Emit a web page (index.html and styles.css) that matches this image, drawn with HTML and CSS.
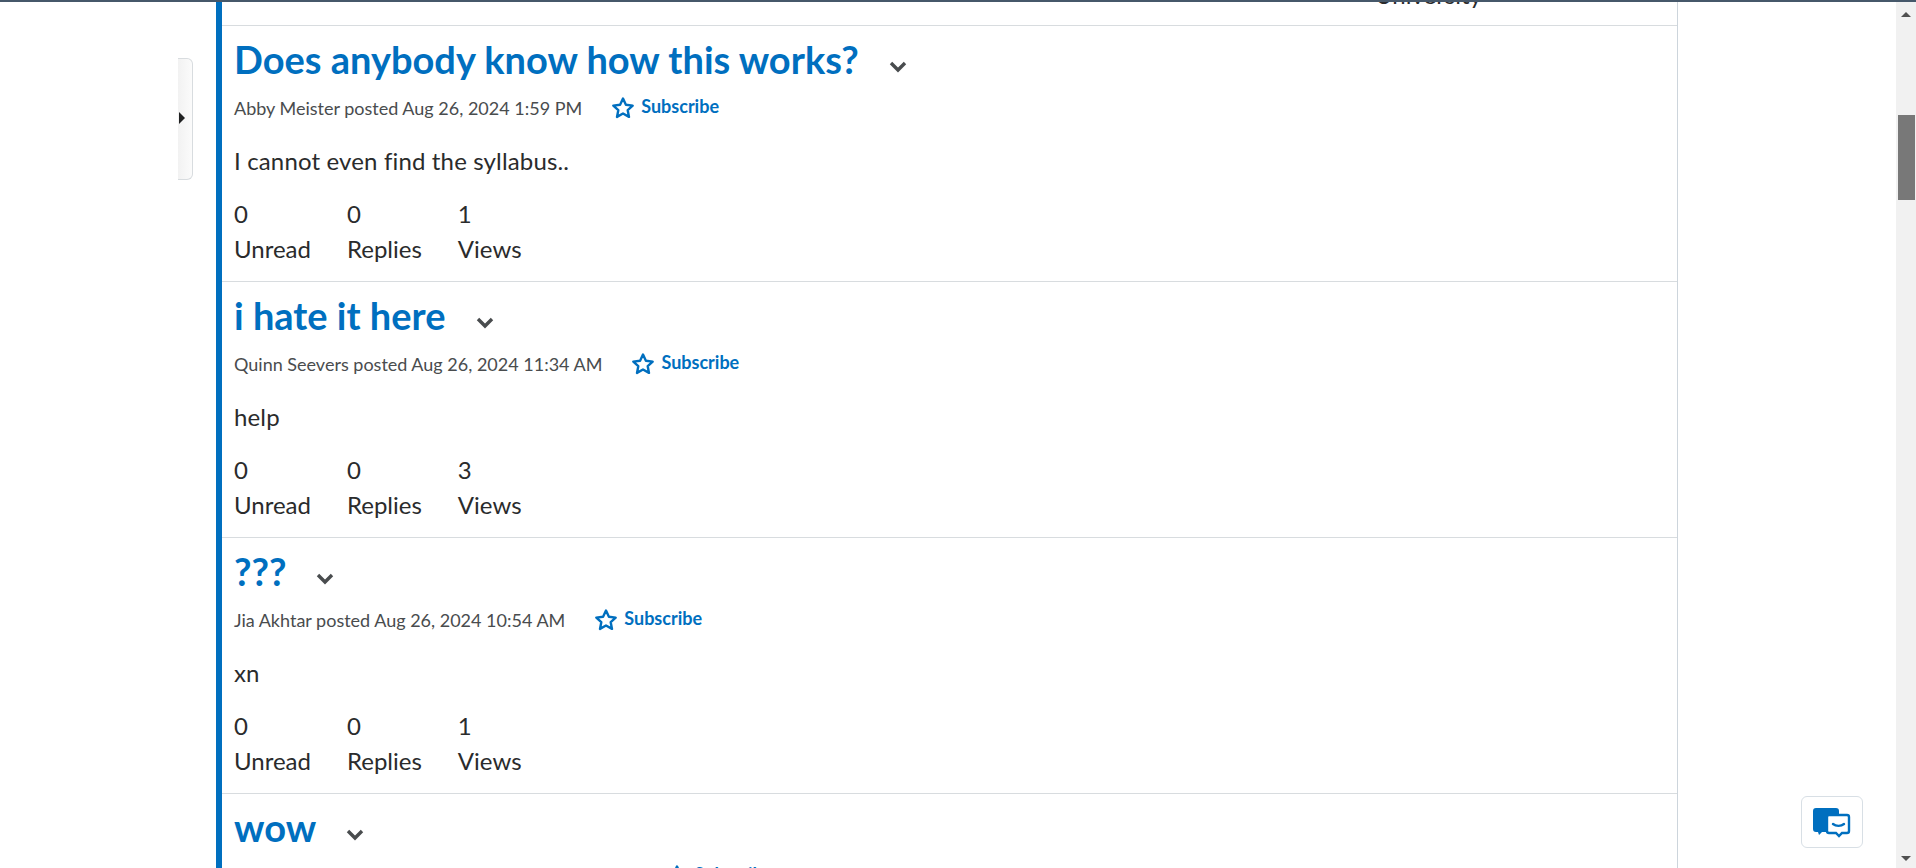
FILE: index.html
```html
<!DOCTYPE html>
<html lang="en">
<head>
<meta charset="utf-8">
<title>Discussion topics</title>
<link rel="stylesheet" href="styles.css">
</head>
<body>
<div class="topbar"></div>
<div class="viewport">
  <div class="page">
    <div class="rail">
      <button class="toggle" aria-label="Show panel"><span class="tri"></span></button>
    </div>
    <main class="list">
      <div class="stub"><span class="stub-text">University</span></div>
      <article class="item">
        <div class="title-row"><h2 class="title">Does anybody know how this works?</h2><svg class="chev" viewBox="0 0 18 12"><path d="M2 2l7 7 7-7" /></svg></div>
        <div class="meta-row"><span class="meta">Abby Meister posted Aug 26, 2024 1:59 PM</span><a class="sub"><svg class="star" viewBox="0 0 24 24"><path d="M12 2.6l2.9 6.2 6.8.8-5 4.6 1.3 6.7-6-3.4-6 3.4 1.3-6.7-5-4.6 6.8-.8z"/></svg>Subscribe</a></div>
        <p class="body">I cannot even find the syllabus..</p>
        <div class="stats">
          <div class="stat"><span>0</span><span>Unread</span></div>
          <div class="stat"><span>0</span><span>Replies</span></div>
          <div class="stat"><span>1</span><span>Views</span></div>
        </div>
      </article>
      <article class="item">
        <div class="title-row"><h2 class="title">i hate it here</h2><svg class="chev" viewBox="0 0 18 12"><path d="M2 2l7 7 7-7" /></svg></div>
        <div class="meta-row"><span class="meta">Quinn Seevers posted Aug 26, 2024 11:34 AM</span><a class="sub"><svg class="star" viewBox="0 0 24 24"><path d="M12 2.6l2.9 6.2 6.8.8-5 4.6 1.3 6.7-6-3.4-6 3.4 1.3-6.7-5-4.6 6.8-.8z"/></svg>Subscribe</a></div>
        <p class="body">help</p>
        <div class="stats">
          <div class="stat"><span>0</span><span>Unread</span></div>
          <div class="stat"><span>0</span><span>Replies</span></div>
          <div class="stat"><span>3</span><span>Views</span></div>
        </div>
      </article>
      <article class="item">
        <div class="title-row"><h2 class="title">???</h2><svg class="chev" viewBox="0 0 18 12"><path d="M2 2l7 7 7-7" /></svg></div>
        <div class="meta-row"><span class="meta">Jia Akhtar posted Aug 26, 2024 10:54 AM</span><a class="sub"><svg class="star" viewBox="0 0 24 24"><path d="M12 2.6l2.9 6.2 6.8.8-5 4.6 1.3 6.7-6-3.4-6 3.4 1.3-6.7-5-4.6 6.8-.8z"/></svg>Subscribe</a></div>
        <p class="body">xn</p>
        <div class="stats">
          <div class="stat"><span>0</span><span>Unread</span></div>
          <div class="stat"><span>0</span><span>Replies</span></div>
          <div class="stat"><span>1</span><span>Views</span></div>
        </div>
      </article>
      <article class="item">
        <div class="title-row"><h2 class="title">wow</h2><svg class="chev" viewBox="0 0 18 12"><path d="M2 2l7 7 7-7" /></svg></div>
        <div class="meta-row"><span class="meta">Samantha Rodrigol posted Aug 26, 2024 10:02 AM</span><a class="sub"><svg class="star" viewBox="0 0 24 24"><path d="M12 2.6l2.9 6.2 6.8.8-5 4.6 1.3 6.7-6-3.4-6 3.4 1.3-6.7-5-4.6 6.8-.8z"/></svg>Subscribe</a></div>
      </article>
    </main>
  </div>
  <div class="scrollbar">
    <div class="arrow up"></div>
    <div class="thumb"></div>
    <div class="arrow down"></div>
  </div>
</div>
<button class="chat" aria-label="Chat">
  <svg viewBox="0 0 40 32" class="chat-icon">
    <path class="bubble-a" d="M4 2h20a3 3 0 0 1 3 3v18a3 3 0 0 1-3 3H10l-3 3-1-3H4a3 3 0 0 1-3-3V5a3 3 0 0 1 3-3z"/>
    <path class="bubble-b" d="M17 9h18a2 2 0 0 1 2 2v14a2 2 0 0 1-2 2h-5l-3 3-3-3h-7a2 2 0 0 1-2-2V11a2 2 0 0 1 2-2z"/>
    <path class="smile" d="M21 18c3 2.5 8 2.5 11 0"/>
  </svg>
</button>
</body>
</html>
```
FILE: styles.css
```css
* { box-sizing: border-box; }
html, body { margin: 0; height: 100%; overflow: hidden; background: #fff; }
body { font-family: Lato, "Liberation Sans", sans-serif; font-variant-ligatures: none; color: #2a2b2c; display: flex; flex-direction: column; }
.topbar { height: 2px; background: #46586a; flex: none; }
.viewport { flex: 1; display: flex; min-height: 0; position: relative; }
.page { flex: 1; display: flex; min-width: 0; overflow: hidden; padding-left: 178px; align-items: flex-start; }
.rail { width: 38px; flex: none; padding-top: 56px; }
.toggle { display: block; width: 15px; height: 122px; padding: 0; background: linear-gradient(90deg, #f2f2f2, #fbfbfb); border: 1px solid #d8dcdf; border-left: none; border-radius: 0 6px 6px 0; position: relative; }
.tri { position: absolute; left: 1px; top: 53px; border-left: 6px solid #202122; border-top: 6px solid transparent; border-bottom: 6px solid transparent; }
.list { width: 1462px; flex: none; border-left: 6px solid #006fbf; border-right: 1px solid #cdd5dc; }
.stub { height: 24px; border-bottom: 1px solid #d8dcdf; display: flex; flex-direction: column; justify-content: flex-end; overflow: hidden; padding: 0 0 18px 1153px; font-size: 24px; line-height: 24px; }
.stub-text { display: block; white-space: nowrap; }
.item { height: 256px; padding: 9px 12px 0 12px; border-bottom: 1px solid #d8dcdf; }
.title-row { display: flex; align-items: center; height: 48px; gap: 30px; }
.title { margin: 0; font-size: 38px; line-height: 48px; font-weight: 700; color: #006fbf; white-space: nowrap; }
.chev { width: 18px; height: 12px; margin-top: 15px; fill: none; stroke: #494c4e; stroke-width: 3.4; }
.meta-row { display: flex; align-items: center; margin-top: 10px; height: 28px; gap: 29px; }
.meta { font-size: 18px; line-height: 28px; color: #494c4e; margin-top: 2px; white-space: nowrap; }
.sub { display: flex; align-items: center; gap: 6px; font-size: 18px; font-weight: 700; color: #006fbf; margin-top: -2px; }
.star { width: 24px; height: 24px; fill: none; stroke: #006fbf; stroke-width: 2.4; stroke-linejoin: round; margin-top: 3px; }
.body { margin: 25px 0 0; font-size: 24px; line-height: 30px; letter-spacing: 0.15px; }
.stats { display: flex; margin-top: 20px; gap: 36px; }
.stat { display: flex; flex-direction: column; font-size: 24px; line-height: 35px; }
.scrollbar { width: 20px; flex: none; background: #f1f1f1; position: relative; }
.arrow { position: absolute; left: 5px; border-left: 5px solid transparent; border-right: 5px solid transparent; }
.arrow.up { top: 10px; border-bottom: 5px solid #505050; }
.arrow.down { bottom: 7px; border-top: 5px solid #505050; }
.thumb { position: absolute; top: 113px; left: 2px; width: 17px; height: 85px; background: #787878; }
.chat { position: absolute; left: 1801px; top: 796px; width: 62px; height: 52px; background: #fff; border: 1px solid #d8dfe5; border-radius: 6px; padding: 0; display: flex; align-items: center; justify-content: center; }
.chat-icon { width: 40px; height: 32px; }
.bubble-a { fill: #006fbf; }
.bubble-b { fill: #fff; stroke: #006fbf; stroke-width: 2.4; }
.smile { fill: none; stroke: #006fbf; stroke-width: 2.4; stroke-linecap: round; }
```
